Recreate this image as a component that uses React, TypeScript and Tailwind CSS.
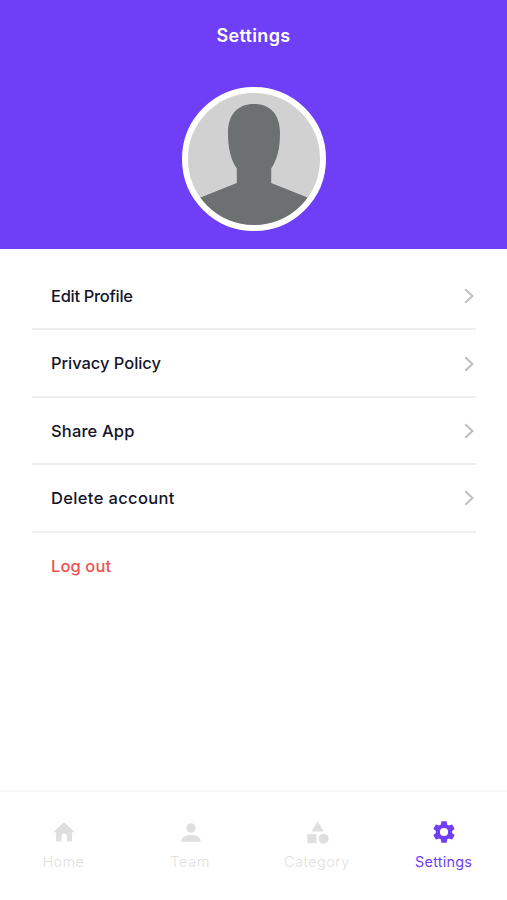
import * as React from "react"
import { clsx } from "clsx"
import { MdCategory } from "react-icons/md"

interface MenuItem {
  label: string
  tracking: string
  danger?: boolean
}

const menuItems: MenuItem[] = [
  { label: "Edit Profile", tracking: "tracking-[-0.3px]" },
  { label: "Privacy Policy", tracking: "tracking-[-0.05px]" },
  { label: "Share App", tracking: "tracking-[0.15px]" },
  { label: "Delete account", tracking: "tracking-[0.35px]" },
  { label: "Log out", tracking: "tracking-[0.1px]", danger: true },
]

function HomeIcon() {
  return (
    <svg viewBox="0 0 22 20" className="h-5 w-[22px]" fill="currentColor">
      <path d="M11 0.3 22 10.2h-3V19a.6.6 0 0 1-.6.6h-4.6v-5.2a2.6 2.6 0 0 0-5.2 0v5.2H3.6a.6.6 0 0 1-.6-.6v-8.8H0Z" />
    </svg>
  )
}

function PersonIcon() {
  return (
    <svg viewBox="0 0 20 19" className="h-[19px] w-5" fill="currentColor">
      <circle cx="10" cy="5" r="4.7" />
      <path d="M.4 18.7v-1C.4 13.9 5.5 12 10 12s9.6 1.9 9.6 5.7v1Z" />
    </svg>
  )
}

function CogIcon() {
  return (
    <svg viewBox="0 0 24 24" className="size-[26px]" fill="currentColor">
      <path d="M12 15.8A3.8 3.8 0 0 1 8.2 12 3.8 3.8 0 0 1 12 8.2a3.8 3.8 0 0 1 3.8 3.8 3.8 3.8 0 0 1-3.8 3.8m7.43-2.83c.04-.32.07-.64.07-.97s-.03-.66-.07-1l2.11-1.63c.19-.15.24-.42.12-.64l-2-3.46c-.12-.22-.39-.31-.61-.22l-2.49 1c-.52-.39-1.06-.73-1.69-.98l-.37-2.65A.506.506 0 0 0 14 2h-4c-.25 0-.46.18-.5.42l-.37 2.65c-.63.25-1.17.59-1.69.98l-2.49-1c-.22-.09-.49 0-.61.22l-2 3.46c-.13.22-.07.49.12.64L4.57 11c-.04.34-.07.67-.07 1s.03.65.07.97l-2.11 1.66c-.19.15-.25.42-.12.64l2 3.46c.12.22.39.3.61.22l2.49-1.01c.52.4 1.06.74 1.69.99l.37 2.65c.04.24.25.42.5.42h4c.25 0 .46-.18.5-.42l.37-2.65c.63-.26 1.17-.59 1.69-.99l2.49 1.01c.22.08.49 0 .61-.22l2-3.46c.12-.22.07-.49-.12-.64z" />
    </svg>
  )
}

const tabs = [
  { label: "Home", icon: <HomeIcon />, tracking: "tracking-[0.4px]" },
  { label: "Team", icon: <PersonIcon />, tracking: "tracking-[0.6px]" },
  { label: "Category", icon: <MdCategory className="size-[27px]" />, tracking: "tracking-[0.45px]" },
  { label: "Settings", icon: <CogIcon />, tracking: "tracking-[0.2px]", active: true },
]

function Avatar() {
  return (
    <div className="size-36 overflow-hidden rounded-full border-[6px] border-white bg-[#d0d1d0]">
      <svg viewBox="0 0 132 132" className="size-full">
        <path
          fill="#6d7071"
          d="M66 11C50 11 40 21 40 40c0 16 3 27 8.800 35.500V90L0 109.500V132h132v-22.500L83.200 90V75.500C89 67 92 56 92 40c0-19-10-29-26-29Z"
        />
      </svg>
    </div>
  )
}

function MenuRow({ label, tracking, danger = false }: MenuItem) {
  return (
    <button
      className={clsx(
        "flex h-[67.4px] w-full items-center justify-between pt-px pr-[2px] pl-[19px]",
        !danger && "border-b-2 border-[#eeeeef]"
      )}
    >
      <span
        className={clsx(
          "text-[16.5px] font-medium",
          tracking,
          danger ? "text-[#f0524f]" : "text-[#14142a]"
        )}
      >
        {label}
      </span>
      {!danger && (
        <svg viewBox="0 0 10 16" className="h-4 w-2.5" fill="none" stroke="#bdbdbf" strokeWidth="1.9">
          <path d="M1.2 1.2 8.5 8l-7.3 6.8" />
        </svg>
      )}
    </button>
  )
}

export default function App() {
  return (
    <div className="flex h-[900px] w-full flex-col bg-white font-['Inter',sans-serif]">
      <header className="flex h-[249px] flex-col items-center bg-[#6f3ff8] pt-[22px]">
        <h1 className="text-lg leading-7 font-semibold tracking-[0.35px] text-white">Settings</h1>
        <div className="mt-[37px]">
          <Avatar />
        </div>
      </header>

      <main className="flex-1 pt-[14px] pr-[31px] pl-8">
        {menuItems.map((item) => (
          <MenuRow key={item.label} {...item} />
        ))}
      </main>

      <nav className="grid h-[110px] grid-cols-4 border-t-2 border-[#f7f7f7] pt-[26px]">
        {tabs.map(({ label, icon, tracking, active }) => (
          <button
            key={label}
            className={clsx(
              "flex flex-col items-center",
              active ? "text-[#6f3ff8]" : "text-[#dfdfdf]"
            )}
          >
            <span className="flex h-7 items-center pl-px">{icon}</span>
            <span className={clsx("mt-1.5 text-[14.5px] leading-5", !active && "font-light", tracking)}>
              {label}
            </span>
          </button>
        ))}
      </nav>
    </div>
  )
}
